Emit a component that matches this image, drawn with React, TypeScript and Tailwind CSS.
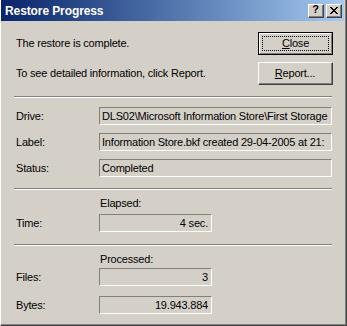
import React from "react";

// Classic Win2000 "Restore Progress" dialog
const FONT = { fontFamily: '"Liberation Sans", Arial, sans-serif' };

function Etched() {
  return <div className="h-[2px] border-t border-b border-t-[#808080] border-b-white" />;
}

function Field({ text, right, width }: { text: string; right?: boolean; width: string }) {
  return (
    <div
      className={`${width} h-[18px] border border-t-[#808080] border-l-[#808080] border-b-white border-r-white flex items-center overflow-hidden whitespace-nowrap ${
        right ? "justify-end pr-[3px]" : "pl-[2px]"
      }`}
    >
      {text}
    </div>
  );
}

function Row({ label, children }: { label: string; children: React.ReactNode }) {
  return (
    <div className="flex items-center">
      <div className="w-[85px] pl-[2px]">{label}</div>
      {children}
    </div>
  );
}

function CaptionButton({ children }: { children: React.ReactNode }) {
  return (
    <div className="w-[16px] h-[14px] bg-[#D4D0C8] border border-t-white border-l-white border-b-[#404040] border-r-[#404040] flex">
      <div className="flex-1 border-b border-r border-b-[#808080] border-r-[#808080] flex items-center justify-center">
        {children}
      </div>
    </div>
  );
}

export default function App() {
  return (
    <div className="w-[347px] h-[326px] bg-[#D4D0C8] text-[11px] tracking-[-0.2px] text-black leading-none" style={FONT}>
      <div className="h-full border-l border-l-white border-r border-b border-r-[#404040] border-b-[#404040] flex flex-col">
        <div className="h-full border-r border-b border-r-[#808080] border-b-[#808080] flex flex-col">
          {/* title bar */}
          <div className="h-[21px] mr-[1px] bg-gradient-to-r from-[#0A246A] to-[#A6CAF0] flex items-center pl-[4px] pr-[2px]">
            <span className="text-white font-bold text-[12px] tracking-[-0.1px] flex-1">Restore Progress</span>
            <div className="flex items-center gap-[2px]">
              <CaptionButton>
                <span className="font-bold text-[11px] leading-none -mt-[1px]">?</span>
              </CaptionButton>
              <CaptionButton>
                <svg width="8" height="7" viewBox="0 0 8 7" shapeRendering="crispEdges">
                  <path d="M0 0h2v1h-2zM6 0h2v1h-2zM1 1h2v1h-2zM5 1h2v1h-2zM2 2h4v1h-4zM3 3h2v1h-2zM2 4h4v1h-4zM1 5h2v1h-2zM5 5h2v1h-2zM0 6h2v1h-2zM6 6h2v1h-2z" fill="#000" />
                </svg>
              </CaptionButton>
            </div>
          </div>

          <div className="ml-[13px] w-[318px] flex flex-col">
            {/* message + buttons */}
            <div className="mt-[11px] grid grid-cols-[1fr_75px] gap-y-[7px] mr-[-1px]">
              <div className="flex items-center pl-[2px]">The restore is complete.</div>
              <div className="h-[23px] border border-black flex">
                <div className="flex-1 border border-t-white border-l-white border-b-[#808080] border-r-[#808080] flex p-[2px]">
                  <div className="flex-1 border border-dotted border-black flex items-center justify-center">
                    <span><u>C</u>lose</span>
                  </div>
                </div>
              </div>
              <div className="flex items-center pl-[2px]">To see detailed information, click Report.</div>
              <div className="h-[23px] border border-t-white border-l-white border-b-[#404040] border-r-[#404040] flex">
                <div className="flex-1 border-b border-r border-b-[#808080] border-r-[#808080] flex items-center justify-center">
                  <span><u>R</u>eport...</span>
                </div>
              </div>
            </div>

            <div className="mt-[11px]"><Etched /></div>

            <div className="mt-[9px] flex flex-col gap-[8px]">
              <Row label="Drive:">
                <Field width="w-[233px]" text="DLS02\Microsoft Information Store\First Storage" />
              </Row>
              <Row label="Label:">
                <Field width="w-[233px]" text="Information Store.bkf created 29-04-2005 at 21:" />
              </Row>
              <Row label="Status:">
                <Field width="w-[233px]" text="Completed" />
              </Row>
            </div>

            <div className="mt-[11px]"><Etched /></div>

            <div className="mt-[6px] h-[14px] flex items-center pl-[86px]">Elapsed:</div>
            <div className="mt-[4px]">
              <Row label="Time:">
                <Field width="w-[113px]" right text="4 sec." />
              </Row>
            </div>

            <div className="mt-[12px]"><Etched /></div>

            <div className="mt-[6px] h-[14px] flex items-center pl-[86px]">Processed:</div>
            <div className="mt-[2px] flex flex-col gap-[10px]">
              <Row label="Files:">
                <Field width="w-[113px]" right text="3" />
              </Row>
              <Row label="Bytes:">
                <Field width="w-[113px]" right text="19.943.884" />
              </Row>
            </div>
          </div>
        </div>
      </div>
    </div>
  );
}
